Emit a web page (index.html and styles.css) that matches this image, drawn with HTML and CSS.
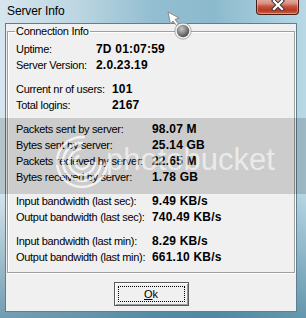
FILE: index.html
```html
<!DOCTYPE html>
<html lang="en">
<head>
    <meta charset="UTF-8">
    <title>Server Info</title>
    <link rel="stylesheet" href="styles.css">
</head>
<body>

    <div class="window">
        <div class="titlebar">
            <span class="title">Server Info</span>
            <button class="close-button">
                <svg width="14" height="12" viewBox="0 0 14 12">
                    <path d="M3 2 L11 10 M11 2 L3 10" stroke="#3a3a3a" stroke-width="4.2" stroke-linecap="square"/>
                    <path d="M3 2 L11 10 M11 2 L3 10" stroke="#ffffff" stroke-width="2.2" stroke-linecap="square"/>
                </svg>
            </button>
        </div>

        <div class="client">
            <fieldset class="group">
                <legend>Connection Info</legend>

                <div class="section col-96">
                    <span class="label">Uptime:</span><span class="value">7D 01:07:59</span>
                    <span class="label">Server Version:</span><span class="value">2.0.23.19</span>
                </div>

                <div class="section col-112">
                    <span class="label">Current nr of users:</span><span class="value">101</span>
                    <span class="label">Total logins:</span><span class="value">2167</span>
                </div>

                <div class="section col-152">
                    <span class="label">Packets sent by server:</span><span class="value">98.07 M</span>
                    <span class="label">Bytes sent by server:</span><span class="value">25.14 GB</span>
                    <span class="label">Packets recieved by server:</span><span class="value">22.65 M</span>
                    <span class="label">Bytes received by server:</span><span class="value">1.78 GB</span>
                </div>

                <div class="section col-152">
                    <span class="label">Input bandwidth (last sec):</span><span class="value">9.49 KB/s</span>
                    <span class="label">Output bandwidth (last sec):</span><span class="value">740.49 KB/s</span>
                </div>

                <div class="section col-152">
                    <span class="label">Input bandwidth (last min):</span><span class="value">8.29 KB/s</span>
                    <span class="label">Output bandwidth (last min):</span><span class="value">661.10 KB/s</span>
                </div>
            </fieldset>

            <div class="actions">
                <button class="ok-button"><span class="focus"><u>O</u>k</span></button>
            </div>
        </div>

        <!-- watermark strip over the picture -->
        <div class="watermark">
            <svg class="swirl" width="70" height="76" viewBox="0 0 70 76">
                <g fill="none" stroke="rgba(255,255,255,0.75)" stroke-width="2.5">
                    <circle cx="38" cy="44" r="7" stroke-dasharray="30 14"/>
                    <circle cx="38" cy="44" r="13" stroke-dasharray="60 22"/>
                    <circle cx="38" cy="44" r="19" stroke-dasharray="90 30"/>
                    <circle cx="38" cy="44" r="25" stroke-dasharray="120 40"/>
                </g>
            </svg>
            <span class="watermark-text">photobucket</span>
        </div>

        <!-- mouse cursor (arrow + busy ring) -->
        <svg class="cursor" width="26" height="32" viewBox="0 0 26 32">
            <defs>
                <radialGradient id="ball" cx="40%" cy="35%" r="65%">
                    <stop offset="0" stop-color="#c8c8c8"/>
                    <stop offset="0.6" stop-color="#7a7a7a"/>
                    <stop offset="1" stop-color="#444"/>
                </radialGradient>
            </defs>
            <path d="M1 1 L12 7 L8 8.5 L11.5 13 L9.5 14.5 L6 10 L3.5 13 Z" fill="#fff" stroke="#8a8a8a" stroke-width="1"/>
            <circle cx="16" cy="20" r="7" fill="url(#ball)" stroke="#f4f4f4" stroke-width="1.5"/>
            <circle cx="16" cy="20" r="8.2" fill="none" stroke="#9a9a9a" stroke-width="0.8"/>
        </svg>
    </div>

</body>
</html>
```

FILE: styles.css
```css
body {
    margin: 0;
    font-family: "Liberation Sans", Arial, sans-serif;
}
.window {
    position: relative;
    width: 306px;
    height: 318px;
    box-sizing: border-box;
    display: flex;
    flex-direction: column;
    overflow: hidden;
    background:
        linear-gradient(to bottom, rgba(255, 255, 255, 0) 60%, rgba(30, 95, 125, 0.55) 100%),
        linear-gradient(to right, #d6e6ef 0%, #bcd6e2 25%, #93bed1 50%, #8cbacd 70%, #a7cede 90%, #b9d8e5 100%);
}
.titlebar {
    display: flex;
    justify-content: space-between;
    align-items: flex-start;
    height: 23px;
    flex-shrink: 0;
}
.title {
    padding-left: 7px;
    font-size: 12px;
    line-height: 23px;
    letter-spacing: -0.1px;
    color: #000;
}
.close-button {
    width: 43px;
    height: 16px;
    margin: -1px 7px 0 0;
    padding: 0;
    display: flex;
    align-items: center;
    justify-content: center;
    border: 1px solid #4a1c17;
    border-top: none;
    border-radius: 0 0 4px 4px;
    background: linear-gradient(to bottom, #e4b0a4 0%, #d68f80 30%, #c5533f 50%, #b73822 75%, #d0613e 100%);
    box-shadow: inset 0 0 0 1px rgba(255, 210, 200, 0.45);
}
.close-button svg {
    margin-top: -3px;
}
.client {
    margin: 0 9px 6px 5px;
    flex: 1;
    background-color: #f0f0f0;
    border: 1px solid #5e7f90;
    display: flex;
    flex-direction: column;
}
.group {
    margin: 1px 1px 0 1px;
    padding: 3px 8px 7px 8px;
    border: 1px solid #a0a0a0;
    box-shadow: 1px 1px 0 #fff, inset 1px 1px 0 #fff;
}
.group legend {
    margin-left: -1px;
    padding: 0 1px;
    font-size: 11px;
    line-height: 13px;
    letter-spacing: -0.3px;
}
.section {
    display: grid;
    align-items: baseline;
    line-height: 16px;
    margin-bottom: 8px;
}
.section:last-child {
    margin-bottom: 0;
}
.col-96 {
    grid-template-columns: 80px auto;
}
.col-112 {
    grid-template-columns: 96px auto;
}
.col-152 {
    grid-template-columns: 136px auto;
}
.label {
    font-size: 11px;
    letter-spacing: -0.3px;
    white-space: nowrap;
}
.value {
    font-size: 12px;
    font-weight: bold;
    letter-spacing: 0.2px;
    white-space: nowrap;
}
.actions {
    display: flex;
    justify-content: center;
    padding-top: 9px;
}
.ok-button {
    width: 75px;
    height: 24px;
    padding: 3px;
    font-family: "Liberation Sans", Arial, sans-serif;
    font-size: 11px;
    color: #000;
    background-color: #f0f0f0;
    border: 1px solid #5a5a5a;
    box-shadow: inset 1px 1px 0 #fff, inset -1px -1px 0 #9a9a9a;
}
.ok-button .focus {
    display: flex;
    align-items: center;
    justify-content: center;
    height: 100%;
    border: 1px dotted #000;
    box-sizing: border-box;
}
.watermark {
    position: absolute;
    left: 0;
    top: 118px;
    width: 306px;
    height: 76px;
    background-color: rgba(0, 0, 0, 0.15);
}
.swirl {
    position: absolute;
    left: 44px;
    top: 0;
}
.watermark-text {
    position: absolute;
    left: 106px;
    top: 24px;
    font-size: 31px;
    line-height: 36px;
    color: rgba(255, 255, 255, 0.6);
}
.cursor {
    position: absolute;
    left: 167px;
    top: 11px;
}
```
